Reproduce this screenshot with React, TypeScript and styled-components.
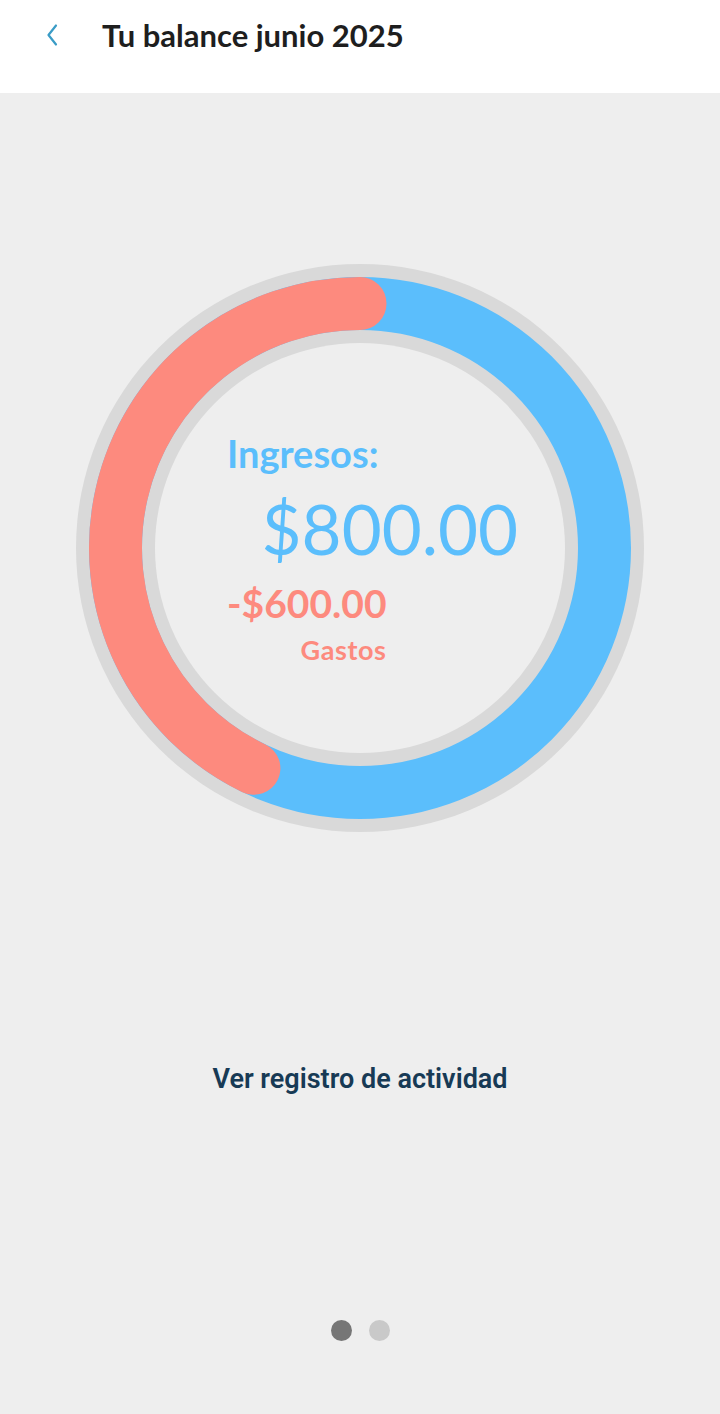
import React from 'react';
import styled, { createGlobalStyle } from 'styled-components';

const GlobalStyle = createGlobalStyle`
  html, body {
    margin: 0;
    padding: 0;
    background: #eeeeee;
  }
  * { box-sizing: border-box; }
`;

const Page = styled.div`
  width: 720px;
  height: 1414px;
  display: flex;
  flex-direction: column;
  background: #eeeeee;
  font-family: Lato, "Noto Sans", sans-serif;
`;

const Header = styled.header`
  height: 93px;
  background: #ffffff;
  display: flex;
  align-items: center;
  padding-left: 40px;
  padding-bottom: 23px;
`;

const BackButton = styled.button`
  width: 24px;
  height: 28px;
  padding: 0;
  border: none;
  background: none;
  display: flex;
  align-items: center;
  justify-content: center;
  margin-right: 38px;
`;

const Title = styled.h1`
  margin: 0;
  font-size: 31px;
  font-weight: 700;
  color: #1e1e1e;
  letter-spacing: 0;
`;

const Body = styled.main`
  flex: 1;
  display: flex;
  flex-direction: column;
  align-items: center;
  padding-top: 171px;
`;

const Chart = styled.div`
  position: relative;
  width: 568px;
  height: 568px;
`;

const ChartSvg = styled.svg`
  position: absolute;
  inset: 0;
`;

const Center = styled.div`
  position: relative;
  width: 100%;
  height: 100%;
  display: flex;
  align-items: center;
  justify-content: center;
`;

const Summary = styled.div`
  width: 291px;
  display: flex;
  flex-direction: column;
  margin-left: 25px;
  margin-top: 0px;
`;

const Label = styled.div`
  font-size: 38px;
  font-weight: 700;
  color: #5bbefc;
  line-height: 1;
`;

const Amount = styled.div`
  align-self: flex-end;
  font-size: 69px;
  font-weight: 400;
  color: #5bbefc;
  line-height: 1;
  margin-top: 22px;
`;

const Expense = styled.div`
  align-self: flex-start;
  display: flex;
  flex-direction: column;
  align-items: flex-end;
  margin-top: 21px;
  color: #fd8a7e;
  font-weight: 700;
`;

const ExpenseAmount = styled.div`
  font-size: 39px;
  line-height: 1;
`;

const ExpenseLabel = styled.div`
  font-size: 27px;
  letter-spacing: 0.6px;
  line-height: 1;
  margin-top: 13px;
`;

const ActivityLink = styled.a`
  margin-top: 232px;
  font-family: Roboto, "Noto Sans", sans-serif;
  font-size: 27px;
  font-weight: 600;
  line-height: 30px;
  color: #173a55;
  text-decoration: none;
`;

const Dots = styled.div`
  margin-top: 226px;
  display: flex;
  gap: 17px;
`;

const Dot = styled.span<{ $active?: boolean }>`
  width: 21px;
  height: 21px;
  border-radius: 50%;
  background: ${p => (p.$active ? '#767676' : '#c9c9c9')};
`;

const income = 800;
const expenses = 600;

const BalanceRing: React.FC = () => {
  const c = 284;
  const r = 244.5;
  const share = expenses / (income + expenses);
  const angle = share * 2 * Math.PI;
  const startX = c - r * Math.sin(angle);
  const startY = c - r * Math.cos(angle);
  const largeArc = share > 0.5 ? 1 : 0;
  return (
    <ChartSvg width="568" height="568" viewBox="0 0 568 568">
      <circle cx={c} cy={c} r={284} fill="#d9d9d9" />
      <circle cx={c} cy={c} r={r} fill="none" stroke="#5bbefc" strokeWidth={53} />
      <path
        d={`M ${startX} ${startY} A ${r} ${r} 0 ${largeArc} 1 ${c} ${c - r}`}
        fill="none"
        stroke="#fd8a7e"
        strokeWidth={53}
        strokeLinecap="round"
      />
      <circle cx={c} cy={c} r={205} fill="#eeeeee" />
    </ChartSvg>
  );
};

const App: React.FC = () => {
  return (
    <Page>
      <GlobalStyle />
      <Header>
        <BackButton aria-label="back">
          <svg width="16" height="24" viewBox="0 0 16 24">
            <path d="M12 2.5 L4.5 12 L12 21.5" fill="none" stroke="#3a9cc6" strokeWidth="2.2" strokeLinecap="round" strokeLinejoin="round" />
          </svg>
        </BackButton>
        <Title>Tu balance junio 2025</Title>
      </Header>
      <Body>
        <Chart>
          <BalanceRing />
          <Center>
            <Summary>
              <Label>Ingresos:</Label>
              <Amount>$800.00</Amount>
              <Expense>
                <ExpenseAmount>-$600.00</ExpenseAmount>
                <ExpenseLabel>Gastos</ExpenseLabel>
              </Expense>
            </Summary>
          </Center>
        </Chart>
        <ActivityLink href="#">Ver registro de actividad</ActivityLink>
        <Dots>
          <Dot $active />
          <Dot />
        </Dots>
      </Body>
    </Page>
  );
};

export default App;
